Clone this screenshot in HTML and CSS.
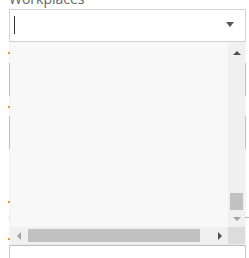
FILE: index.html
```html
<!DOCTYPE html>
<html lang="en">
<head>
  <meta charset="UTF-8">
  <meta name="viewport" content="width=device-width, initial-scale=1.0">
  <title>Workplaces</title>
  <link rel="stylesheet" href="styles.css">
</head>
<body>
  <form class="form">
    <div class="field">
      <label class="field-label">Workplaces</label>
      <div class="select">
        <span class="caret"></span>
        <span class="select-arrow"></span>

        <!-- open dropdown list -->
        <div class="dropdown">
          <div class="dropdown-list"></div>
          <div class="vbar">
            <div class="sb-btn"><span class="arrow-up"></span></div>
            <div class="vtrack"><div class="vthumb"></div></div>
            <div class="sb-btn"><span class="arrow-down off"></span></div>
          </div>
          <div class="hbar">
            <div class="sb-btn"><span class="arrow-left off"></span></div>
            <div class="htrack"><div class="hthumb"></div></div>
            <div class="sb-btn"><span class="arrow-right"></span></div>
          </div>
          <div class="sb-corner"></div>
        </div>
      </div>
    </div>

    <div class="field field-2">
      <span class="req"></span>
      <div class="input"></div>
    </div>

    <div class="field field-3">
      <span class="req"></span>
      <div class="input"></div>
    </div>

    <div class="field field-4">
      <span class="req"></span>
      <div class="rule"></div>
    </div>

    <div class="field field-5">
      <span class="req"></span>
      <div class="input"></div>
    </div>
  </form>
</body>
</html>
```

FILE: styles.css
```css
body {
  margin: 0;
  padding: 0;
  background: #fff;
  font-family: "Open Sans", Arial, sans-serif;
  overflow: hidden;
}

.form {
  margin-top: -10px;
  padding: 0 3px 0 9px;
}

.field-label {
  display: block;
  height: 18px;
  line-height: 18px;
  font-size: 14px;
  color: #666;
  margin-bottom: 1px;
}

.select {
  position: relative;
  height: 31px;
  border: 1px solid #d3d3d3;
  background: #fff;
}

.caret {
  position: absolute;
  left: 4px;
  top: 6px;
  width: 1px;
  height: 18px;
  background: #333;
}

.select-arrow {
  position: absolute;
  right: 11px;
  top: 12px;
  width: 0;
  height: 0;
  border-left: 4px solid transparent;
  border-right: 4px solid transparent;
  border-top: 5px solid #555;
}

/* dropdown panel */
.dropdown {
  position: absolute;
  top: 32px;
  left: 0;
  width: 235px;
  height: 202px;
  z-index: 10;
  display: grid;
  grid-template-columns: 1fr 17px;
  grid-template-rows: 1fr 17px;
  background: #f8f8f8;
  box-shadow: 0 1px 2px rgba(0, 0, 0, 0.12);
}

.dropdown-list {
  background: #f8f8f8;
}

.vbar {
  display: flex;
  flex-direction: column;
  background: #f0f0f0;
}

.hbar {
  display: flex;
  background: #f0f0f0;
}

.sb-btn {
  flex: 0 0 17px;
  height: 17px;
  display: flex;
  align-items: center;
  justify-content: center;
}

.vbar .sb-btn:first-child {
  align-items: flex-end;
  height: 13px;
  flex-basis: 13px;
}

.vtrack {
  flex: 1;
  display: flex;
  flex-direction: column;
  justify-content: flex-end;
  padding: 0 2px 0 2px;
}

.vthumb {
  height: 17px;
  background: #c1c1c1;
}

.htrack {
  flex: 1;
  display: flex;
  align-items: center;
  padding-left: 1px;
}

.hthumb {
  width: 172px;
  height: 13px;
  background: #c1c1c1;
}

.sb-corner {
  background: #dcdcdc;
}

.arrow-up,
.arrow-down {
  width: 0;
  height: 0;
  border-left: 4px solid transparent;
  border-right: 4px solid transparent;
}

.arrow-up {
  border-bottom: 4px solid #505050;
}

.arrow-down {
  border-top: 4px solid #505050;
}

.arrow-left,
.arrow-right {
  width: 0;
  height: 0;
  border-top: 4px solid transparent;
  border-bottom: 4px solid transparent;
}

.arrow-left {
  border-right: 4px solid #505050;
}

.arrow-right {
  border-left: 4px solid #505050;
}

.arrow-down.off {
  border-top-color: #a3a3a3;
}

.arrow-left.off {
  border-right-color: #a3a3a3;
}

/* fields hidden under the dropdown */
.req {
  display: block;
  width: 2px;
  height: 2px;
  margin-left: -1px;
  background: #f0a030;
}

.input {
  height: 31px;
  border: 1px solid #c8c8c8;
  background: #fff;
}

.field-2 {
  margin-top: 10px;
}

.field-2 .req {
  margin-bottom: 9px;
}

.field-3 {
  margin-top: 10px;
}

.field-3 .req {
  margin-bottom: 8px;
}

.field-4 {
  margin-top: 52px;
}

.field-4 .req {
  margin-bottom: 14px;
}

.rule {
  height: 0;
  border-top: 1px solid #b4b4cc;
  margin-right: -3px;
}

.field-5 {
  margin-top: 20px;
}

.field-5 .req {
  margin-bottom: 5px;
}
```
